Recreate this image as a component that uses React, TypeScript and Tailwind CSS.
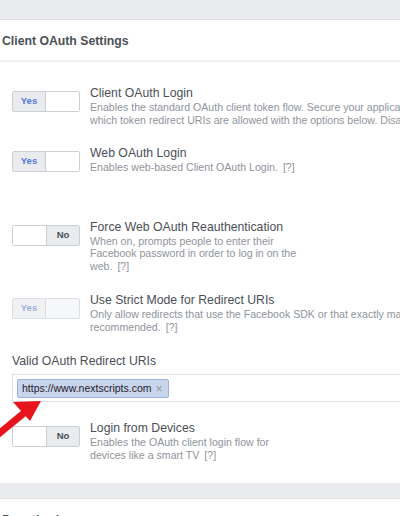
import React from "react";

type ToggleProps = { on: boolean; disabled?: boolean };

function Toggle({ on, disabled }: ToggleProps) {
  return (
    <div
      className={`mt-[5px] flex h-[21px] w-[68px] shrink-0 overflow-hidden rounded-[2px] border ${
        disabled ? "border-[#dddfe2]" : "border-[#ccd0d5]"
      }`}
    >
      {on ? (
        <>
          <div
            className={`flex w-1/2 items-center justify-center border-r text-[9.5px] font-bold ${
              disabled
                ? "border-[#dddfe2] bg-[#f0f1f3] text-[#9db0e0]"
                : "border-[#ccd0d5] bg-[#e9ebee] text-[#5277dc]"
            }`}
          >
            Yes
          </div>
          <div className={`w-1/2 ${disabled ? "bg-[#f6f7f9]" : "bg-white"}`} />
        </>
      ) : (
        <>
          <div className="w-1/2 bg-white" />
          <div className="flex w-1/2 items-center justify-center border-l border-[#ccd0d5] bg-[#e9ebee] text-[9.5px] font-bold text-[#4b4f56]">
            No
          </div>
        </>
      )}
    </div>
  );
}

function Help() {
  return <span className="ml-[5px] text-[#90949c]">[?]</span>;
}

type RowProps = {
  on: boolean;
  disabled?: boolean;
  title: string;
  className: string;
  children: React.ReactNode;
};

function SettingRow({ on, disabled, title, className, children }: RowProps) {
  return (
    <div className={`flex items-start pl-[12px] ${className}`}>
      <Toggle on={on} disabled={disabled} />
      <div className="ml-[10px] whitespace-nowrap">
        <div className="text-[12.25px] leading-[15px] text-[#4b4f56]">{title}</div>
        <div className="text-[10.6px] leading-[12.5px] text-[#90949c]">{children}</div>
      </div>
    </div>
  );
}

export default function App() {
  return (
    <div
      className="relative h-[516px] w-[400px] overflow-hidden bg-white"
      style={{ fontFamily: '"Liberation Sans", Arial, sans-serif' }}
    >
      <div className="h-[20px] border-b border-[#dddfe2] bg-[#e9ebee]" />

      <div className="border-b-2 border-[#f0f1f3] pb-[11px] pl-[2px] pt-[14px] text-[12.25px] font-bold leading-[15px] text-[#4b4f56]">
        Client OAuth Settings
      </div>

      <SettingRow on title="Client OAuth Login" className="mt-[24px]">
        Enables the standard OAuth client token flow. Secure your application and prevent abuse by locking down
        <br />
        which token redirect URIs are allowed with the options below. Disable globally if not used. <Help />
      </SettingRow>

      <SettingRow on title="Web OAuth Login" className="mt-[20px]">
        Enables web-based Client OAuth Login.
        <Help />
      </SettingRow>

      <SettingRow on={false} title="Force Web OAuth Reauthentication" className="mt-[46px]">
        When on, prompts people to enter their
        <br />
        Facebook password in order to log in on the
        <br />
        web.
        <Help />
      </SettingRow>

      <SettingRow on disabled title="Use Strict Mode for Redirect URIs" className="mt-[21px]">
        Only allow redirects that use the Facebook SDK or that exactly match the Valid OAuth Redirect URIs. Strongly
        <br />
        recommended.
        <Help />
      </SettingRow>

      <div className="mt-[21px] pl-[12px] text-[12.25px] leading-[15px] text-[#4b4f56]">
        Valid OAuth Redirect URIs
      </div>
      <div className="ml-[12px] mt-[5px] flex h-[28px] w-[420px] items-start border border-[#dddfe2] pl-[4px] pt-[4px]">
        <div className="flex h-[19px] items-center rounded-[2px] border border-[#9cb4d8] bg-[#c9d5ec] pl-[4px] pr-[5px] text-[10.5px] text-[#1d2129]">
          https://www.nextscripts.com
          <span className="ml-[4px] text-[12px] leading-none text-[#9197a3]">×</span>
        </div>
      </div>

      <SettingRow on={false} title="Login from Devices" className="mt-[19px]">
        Enables the OAuth client login flow for
        <br />
        devices like a smart TV
        <Help />
      </SettingRow>

      <div className="mt-[22px] h-[16px] border-b border-[#dddfe2] bg-[#e9ebee]" />
      <div className="pl-[2px] pt-[14px] text-[12.25px] font-bold leading-[15px] text-[#4b4f56]">
        Deauthorize
      </div>

      <svg
        className="absolute left-0 top-[390px]"
        width="50"
        height="50"
        viewBox="0 390 50 50"
      >
        <line x1="-4" y1="436" x2="24" y2="413" stroke="#e8141b" strokeWidth="7" />
        <polygon points="41,401 13,402 30,421" fill="#e8141b" />
      </svg>
    </div>
  );
}
